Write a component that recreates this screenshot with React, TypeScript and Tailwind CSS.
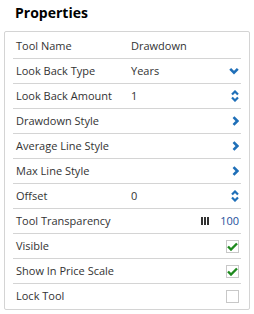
import React from "react";

const Blue = "#1f6fb8";

function ChevronDown() {
  return (
    <svg width="10" height="8" viewBox="0 0 10 8">
      <path d="M1.2 1.8 L5 5.6 L8.8 1.8" fill="none" stroke={Blue} strokeWidth="2.6" />
    </svg>
  );
}
function ChevronRight() {
  return (
    <svg width="7" height="10" viewBox="0 0 7 10">
      <path d="M1.5 1.2 L5.3 5 L1.5 8.8" fill="none" stroke={Blue} strokeWidth="2.6" />
    </svg>
  );
}
function UpDown() {
  return (
    <svg width="8" height="12" viewBox="0 0 8 12">
      <path d="M1 4.5 L4 1.5 L7 4.5" fill="none" stroke={Blue} strokeWidth="2.2" />
      <path d="M1 7.5 L4 10.5 L7 7.5" fill="none" stroke={Blue} strokeWidth="2.2" />
    </svg>
  );
}
function Check({ on }: { on: boolean }) {
  return (
    <div className="w-[13px] h-[13px] border border-[#c8c8c8] bg-white flex items-center justify-center">
      {on && (
        <svg width="11" height="9" viewBox="0 0 11 9">
          <path d="M1 4.5 L4 7.5 L10 1.5" fill="none" stroke="#1e8a1e" strokeWidth="2.4" />
        </svg>
      )}
    </div>
  );
}

type Row = { label: string; value?: string; right?: React.ReactNode };

export default function App() {
  const rows: Row[] = [
    { label: "Tool Name", value: "Drawdown" },
    { label: "Look Back Type", value: "Years", right: <ChevronDown /> },
    { label: "Look Back Amount", value: "1", right: <UpDown /> },
    { label: "Drawdown Style", right: <ChevronRight /> },
    { label: "Average Line Style", right: <ChevronRight /> },
    { label: "Max Line Style", right: <ChevronRight /> },
    { label: "Offset", value: "0", right: <UpDown /> },
    {
      label: "Tool Transparency",
      right: (
        <div className="flex items-center gap-[11px]">
          <div className="flex gap-[1px] items-center">
            <div className="w-[2px] h-[8px] bg-[#333]" />
            <div className="w-[2px] h-[8px] bg-[#333]" />
            <div className="w-[2px] h-[8px] bg-[#333]" />
          </div>
          <span className="text-[#1d4f9c]">100</span>
        </div>
      ),
    },
    { label: "Visible", right: <Check on /> },
    { label: "Show In Price Scale", right: <Check on /> },
    { label: "Lock Tool", right: <Check on={false} /> },
  ];
  return (
    <div
      className="w-[254px] h-[314px] bg-white text-[#333] text-[11px]"
      style={{ fontFamily: '"Open Sans", sans-serif' }}
    >
      <div className="pl-[15px] pt-[3px] h-[31px] text-[14px] font-bold text-black leading-[20px]">
        Properties
      </div>
      <div className="ml-[4px] w-[246px] border border-[#d4d4d4] rounded-[2px] pt-[2px]">
        {rows.map((r, i) => (
          <div
            key={r.label}
            className={
              "mx-[8px] h-[25px] flex items-center pl-[3px] pr-[2px] " +
              (i < rows.length - 1 ? "border-b border-[#d4d4d4]" : "")
            }
          >
            <div className="w-[115px]">{r.label}</div>
            <div className="flex-1">{r.value}</div>
            <div className="flex items-center">{r.right}</div>
          </div>
        ))}
      </div>
    </div>
  );
}
